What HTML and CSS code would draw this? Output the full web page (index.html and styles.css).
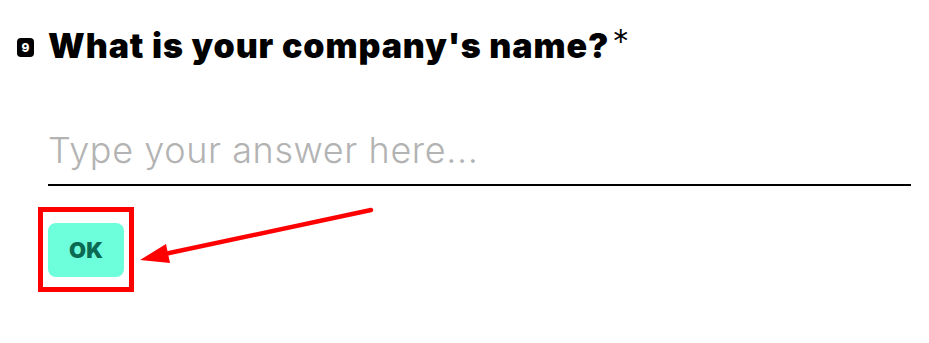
FILE: index.html
```html
<!DOCTYPE html>
<html lang="en">
  <head>
    <meta charset="utf8" />
    <meta name="viewport" content="width=device-width, initial-scale=1" />
    <title>Question 9</title>
    <link rel="stylesheet" href="styles.css">
  </head>
  <body>
    <div class="question">
      <div class="question-head">
        <span class="question-number">9</span>
        <h1>
          <span>What is your company's name?</span><span class="required">*</span>
        </h1>
      </div>
      <div class="answer">
        <input class="answer-input" type="text" placeholder="Type your answer here..." />
        <div class="highlight">
          <button class="btn-ok">OK</button>
        </div>
      </div>
    </div>
    <svg class="arrow" width="929" height="343" viewBox="0 0 929 343">
      <line x1="371" y1="210" x2="160" y2="255" stroke="#ff0000" stroke-width="4.5" stroke-linecap="round" />
      <polygon points="140,260 166,244 170,263" fill="#ff0000" />
    </svg>
  </body>
</html>
```

FILE: styles.css
```css
/* Reset */
body, html {
  margin: 0;
  padding: 0;
  font-family: Inter, sans-serif;
  background: #fff;
}
* {
  box-sizing: border-box;
}
.question {
  padding: 24px 0 0 17px;
}
.question-head {
  display: flex;
  align-items: center;
  gap: 14px;
}
.question-number {
  display: flex;
  align-items: center;
  justify-content: center;
  width: 17px;
  height: 19px;
  margin-top: 2px;
  border-radius: 4px;
  background: #000;
  color: #fff;
  font-size: 12px;
  font-weight: 800;
}
h1 {
  margin: 0;
  font-size: 34px;
  font-weight: 900;
  letter-spacing: 0.9px;
  color: #000;
  line-height: 44px;
}
.required {
  font-weight: 300;
  font-size: 34px;
  position: relative;
  top: -4px;
  margin-left: 3px;
  letter-spacing: 0;
}
.answer {
  padding-left: 31px;
  padding-top: 58px;
}
.answer-input {
  display: block;
  width: 863px;
  padding: 0 0 10px;
  border: none;
  border-bottom: 2px solid #000;
  outline: none;
  font-family: Inter, sans-serif;
  font-size: 36px;
  font-weight: 300;
  letter-spacing: 0.6px;
  line-height: 48px;
  color: #000;
  background: transparent;
}
.answer-input::placeholder {
  color: #b3b3b3;
}
.highlight {
  display: inline-block;
  margin: 21px 0 0 -10px;
  padding: 11px 5px 10px;
  border: 5px solid #ff0000;
}
.btn-ok {
  display: block;
  width: 76px;
  height: 54px;
  border: none;
  border-radius: 8px;
  background: #6dffdb;
  color: #0a6b52;
  font-family: Inter, sans-serif;
  font-size: 22px;
  font-weight: 900;
  cursor: pointer;
}
.arrow {
  position: absolute;
  top: 0;
  left: 0;
  pointer-events: none;
}
```
